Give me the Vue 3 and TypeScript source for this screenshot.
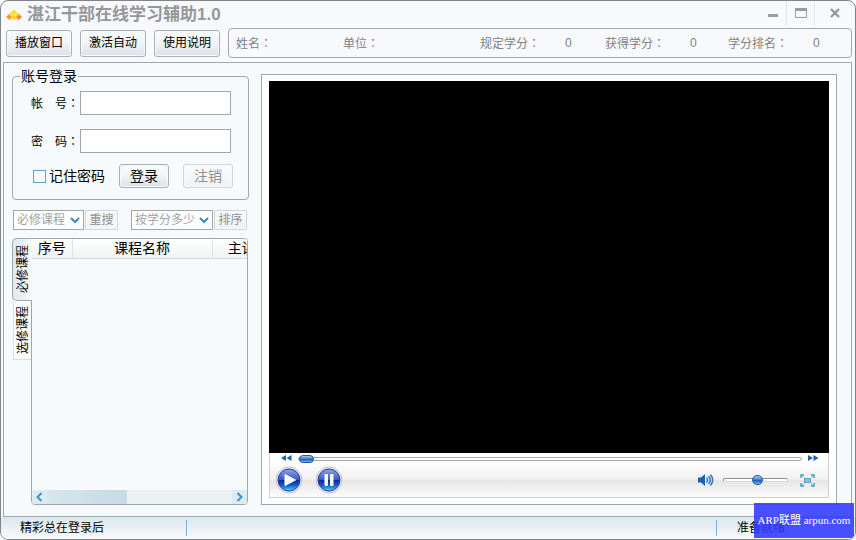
<script setup lang="ts">
import { ref } from 'vue'

interface InfoItem {
  label: string
  value?: string
}

const tools: string[] = ['播放窗口', '激活自动', '使用说明']
const info: InfoItem[] = [
  { label: '姓名' },
  { label: '单位' },
  { label: '规定学分', value: '0' },
  { label: '获得学分', value: '0' },
  { label: '学分排名', value: '0' },
]
const tabs: string[] = ['必修课程', '选修课程']
const columns: string[] = ['序号', '课程名称', '主讲']

const account = ref('')
const password = ref('')
const remember = ref(false)
const activeTab = ref(0)
const progress = ref(0)
const volume = ref(53)
</script>

<template>
  <div class="window">
    <header class="titlebar">
      <svg class="logo" viewBox="0 0 16 12" aria-hidden="true">
        <path d="M8 0.500 L11.500 3.500 L8 6.500 L4.500 3.500Z" fill="#ffe01c" />
        <path d="M3.500 4.500 L7.500 8 L3.500 11 L0 8Z" fill="#f09a28" />
        <path d="M12.500 4.500 L16 8 L12.500 11 L8.500 8Z" fill="#ee8a22" />
        <path d="M8 5.500 L11.500 8.500 L8 11.500 L4.500 8.500Z" fill="#ffcf3a" />
        <path d="M4.500 4 L6.500 6 L4.500 7.500 L2.500 6Z M11.500 4 L13.500 6 L11.500 7.500 L9.500 6Z" fill="#ffd21f" />
        <path d="M5 9.500 L6 10.500 M11 9.500 L10 10.500" stroke="#fff4d8" />
      </svg>
      <h1>湛江干部在线学习辅助1.0</h1>
      <div class="winbtns">
        <button type="button" aria-label="最小化">
          <svg width="12" height="12" viewBox="0 0 12 12"><rect x="1" y="7" width="10" height="3" fill="#9b9da0" /></svg>
        </button>
        <button type="button" aria-label="最大化">
          <svg width="12" height="12" viewBox="0 0 12 12"><path d="M0.500 1.500h11v9h-11z" fill="none" stroke="#9a9da0" /><path d="M0 1h12v3H0z" fill="#9a9da0" /></svg>
        </button>
        <button type="button" class="close" aria-label="关闭">
          <svg width="12" height="12" viewBox="0 0 12 12"><path d="M2 2l8 8M10 2l-8 8" stroke="#8b95a0" stroke-width="2.200" /></svg>
        </button>
      </div>
    </header>

    <div class="toolbar">
      <button v-for="t in tools" :key="t" type="button" class="btn tool">{{ t }}</button>
      <div class="info">
        <div v-for="item in info" :key="item.label" class="info-item">
          <span class="info-label">{{ item.label }}<span class="colon">：</span></span>
          <span v-if="item.value">{{ item.value }}</span>
        </div>
      </div>
    </div>

    <main class="main">
      <section class="side">
        <fieldset class="login">
          <legend>账号登录</legend>
          <div class="field">
            <label for="account">帐　号<span class="colon">：</span></label>
            <input id="account" v-model="account" type="text" />
          </div>
          <div class="field">
            <label for="password">密　码<span class="colon">：</span></label>
            <input id="password" v-model="password" type="password" />
          </div>
          <div class="actions">
            <label class="remember"><input v-model="remember" type="checkbox" />记住密码</label>
            <button type="button" class="btn action">登录</button>
            <button type="button" class="btn action" disabled>注销</button>
          </div>
        </fieldset>

        <div class="filters">
          <div class="pick">
            <select aria-label="课程类型" disabled><option>必修课程</option></select>
            <svg width="10" height="7" viewBox="0 0 10 7"><path d="M1 1l4 4 4-4" fill="none" stroke="#3b8bc6" stroke-width="2.200" /></svg>
          </div>
          <button type="button" class="btn small" disabled>重搜</button>
          <div class="pick wide">
            <select aria-label="排序方式" disabled><option>按学分多少</option></select>
            <svg width="10" height="7" viewBox="0 0 10 7"><path d="M1 1l4 4 4-4" fill="none" stroke="#3b8bc6" stroke-width="2.200" /></svg>
          </div>
          <button type="button" class="btn small" disabled>排序</button>
        </div>

        <div class="courses">
          <div class="tabs" role="tablist">
            <button
              v-for="(t, i) in tabs"
              :key="t"
              type="button"
              role="tab"
              class="tab"
              :class="{ active: activeTab === i }"
              :aria-selected="activeTab === i"
              @click="activeTab = i"
            ><span>{{ t }}</span></button>
          </div>
          <div class="list">
            <div class="viewport">
              <table>
                <thead>
                  <tr><th v-for="c in columns" :key="c" scope="col">{{ c }}</th></tr>
                </thead>
              </table>
            </div>
            <div class="scroll">
              <button type="button" aria-label="向左滚动">
                <svg width="7" height="10" viewBox="0 0 7 10"><path d="M5.500 1l-4 4 4 4" fill="none" stroke="#3f92c4" stroke-width="2" /></svg>
              </button>
              <div class="track"><div class="thumb"></div></div>
              <button type="button" aria-label="向右滚动">
                <svg width="7" height="10" viewBox="0 0 7 10"><path d="M1.500 1l4 4-4 4" fill="none" stroke="#3f92c4" stroke-width="2" /></svg>
              </button>
            </div>
          </div>
        </div>
      </section>

      <section class="player">
        <div class="video"></div>
        <div class="controls">
          <div class="seek">
            <button type="button" class="plain" aria-label="快退">
              <svg width="11" height="7" viewBox="0 0 11 7"><path d="M5 0v6L0 3zM10.500 0v6L5.500 3z" fill="#1d62a8" /></svg>
            </button>
            <input v-model="progress" type="range" class="range seekbar" min="0" max="100" aria-label="进度" />
            <button type="button" class="plain" aria-label="快进">
              <svg width="11" height="7" viewBox="0 0 11 7"><path d="M0 0v6l5-3zM5.500 0v6l5-3z" fill="#1d62a8" /></svg>
            </button>
          </div>
          <div class="buttons">
            <button type="button" class="plain" aria-label="播放">
              <svg width="28" height="28" viewBox="0 0 28 28">
                <defs>
                  <linearGradient id="orb" x1="0" y1="0" x2="0" y2="1">
                    <stop offset="0" stop-color="#8fa6e0" />
                    <stop offset="0.48" stop-color="#3c5cc0" />
                    <stop offset="0.52" stop-color="#0a2a9c" />
                    <stop offset="0.75" stop-color="#1660cc" />
                    <stop offset="1" stop-color="#4fd8ff" />
                  </linearGradient>
                </defs>
                <circle cx="14" cy="14" r="13" fill="#e4e5f1" stroke="#c3c5dc" />
                <circle cx="14" cy="14" r="11" fill="url(#orb)" stroke="#2a3d9a" />
                <path d="M10 8.500v11l10.500-5.500z" fill="#fff" stroke="#fff" stroke-linejoin="round" />
              </svg>
            </button>
            <button type="button" class="plain" aria-label="暂停">
              <svg width="28" height="28" viewBox="0 0 28 28">
                <circle cx="14" cy="14" r="13" fill="#e4e5f1" stroke="#c3c5dc" />
                <circle cx="14" cy="14" r="11" fill="url(#orb)" stroke="#2a3d9a" />
                <rect x="9.500" y="8" width="3.500" height="12" rx="1" fill="#fff" />
                <rect x="15" y="8" width="3.500" height="12" rx="1" fill="#fff" />
              </svg>
            </button>
            <div class="spacer"></div>
            <button type="button" class="plain" aria-label="静音">
              <svg width="16" height="14" viewBox="0 0 16 14">
                <path d="M0 4.500h3L7 1v12L3 9.500H0z" fill="#1b62ae" />
                <path d="M8.500 4.500q2 2.500 0 5M10.500 3q3.500 4 0 8M12.500 1.500q4.500 5.500 0 11" fill="none" stroke="#3b7fc4" stroke-width="1.600" />
              </svg>
            </button>
            <input v-model="volume" type="range" class="range volume" min="0" max="100" aria-label="音量" />
            <button type="button" class="plain" aria-label="全屏">
              <svg width="15" height="13" viewBox="0 0 15 13">
                <path d="M1 4V1h3M11 1h3v3M14 9v3h-3M4 12H1V9" fill="none" stroke="#3c97bd" stroke-width="1.300" />
                <path d="M2 2l2 2M13 2l-2 2M13 11l-2-2M2 11l2-2" stroke="#8ac2da" />
                <rect x="4.500" y="4.500" width="6" height="4" fill="#86bede" stroke="#5aa6cc" />
              </svg>
            </button>
          </div>
        </div>
      </section>
    </main>

    <footer class="status">
      <span class="message">精彩总在登录后</span>
      <span class="ready">准备就绪</span>
    </footer>
    <div class="badge">ARP联盟 arpun.com</div>
  </div>
</template>

<style>
body {
  margin: 0;
  background: #fff;
}
</style>

<style scoped>
* {
  box-sizing: border-box;
}
.window {
  position: relative;
  display: flex;
  flex-direction: column;
  min-height: 100vh;
  border: 1px solid #828385;
  border-radius: 8px;
  background: #f7f9fc;
  font-family: "Liberation Sans", "Noto Sans CJK SC", sans-serif;
  font-size: 12px;
  line-height: 16px;
  color: #000;
  overflow: hidden;
}
button,
input,
select {
  margin: 0;
  padding: 0;
  font: inherit;
  color: inherit;
}
svg {
  display: block;
}
.colon {
  font-family: "Noto Sans CJK TC", sans-serif;
}
.titlebar {
  display: flex;
  align-items: center;
  height: 27px;
  padding-left: 5px;
}
.logo {
  width: 16px;
  height: 12px;
}
h1 {
  flex: 1;
  margin: 0 0 0 5px;
  font-size: 17px;
  line-height: 24px;
  font-weight: 700;
  color: #959799;
}
.winbtns {
  display: flex;
  align-self: flex-start;
}
.winbtns button {
  display: flex;
  align-items: center;
  justify-content: center;
  width: 28px;
  height: 24px;
  border: 0;
  border-right: 1px solid #e3e6ea;
  background: none;
}
.winbtns .close {
  width: 40px;
  border: 0;
}
.btn {
  border: 1px solid #abb0b4;
  border-radius: 3px;
  background: linear-gradient(#fafbfc, #f0f3f5 50%, #d9e3e6);
  box-shadow: inset 0 0 0 1px #f5f8fa;
  white-space: nowrap;
}
.btn:disabled {
  border-color: #d3d6d8;
  color: #8d8f91;
  background: linear-gradient(#fafbfc, #f0f1f2);
}
.toolbar {
  display: flex;
  align-items: center;
  gap: 8px;
  height: 30px;
  margin: 0 3px 4px 5px;
}
.tool {
  width: 66px;
  height: 27px;
}
.info {
  flex: 1;
  display: grid;
  grid-template-columns: 107fr 137fr 125fr 123fr 123fr;
  align-items: center;
  height: 30px;
  padding-left: 7px;
  border: 1px solid #a5a8ab;
  border-radius: 4px;
  color: #808284;
}
.info-item {
  display: flex;
}
.info-label {
  min-width: 85px;
}
.main {
  flex: 1;
  display: grid;
  grid-template-columns: 237px 1fr;
  gap: 12px;
  margin: 0 3px 0 2px;
  padding: 5px 14px 11px 8px;
  border: 1px solid #9aabb0;
  background: #f7fafc;
}
.side {
  display: flex;
  flex-direction: column;
  min-width: 0;
}
.login {
  min-width: 0;
  margin: 0;
  padding: 7px 15px 11px 18px;
  border: 1px solid #a2a6aa;
  border-radius: 4px;
}
legend {
  margin-left: -11px;
  padding: 0 1px;
  font-size: 14px;
  line-height: 16px;
}
.field {
  display: flex;
  align-items: center;
  margin-bottom: 14px;
}
.field label {
  width: 49px;
  white-space: nowrap;
}
.field input {
  flex: 1;
  min-width: 0;
  height: 24px;
  margin-right: 2px;
  padding: 0 4px;
  border: 1px solid #a2a6aa;
  background: #fff;
}
.actions {
  display: flex;
  gap: 14px;
  margin-top: -3px;
  font-size: 14px;
}
.remember {
  flex: 1;
  display: flex;
  align-items: center;
  gap: 3px;
  padding-left: 2px;
  white-space: nowrap;
}
.remember input {
  appearance: none;
  width: 13px;
  height: 13px;
  border: 1px solid #5b9fd6;
  background: #f8fcff;
}
.remember input:checked {
  background: #5b9fd6;
}
.action {
  width: 50px;
  height: 24px;
}
.filters {
  display: flex;
  gap: 1px;
  margin: 10px 2px 8px 1px;
}
.pick {
  position: relative;
  width: 71px;
  height: 20px;
}
.wide {
  width: 82px;
  margin-left: 12px;
}
.pick select {
  appearance: none;
  width: 100%;
  height: 100%;
  padding-left: 3px;
  border: 1px solid #a2a6aa;
  border-radius: 0;
  background: #fff;
  color: #a0a3a6;
  opacity: 1;
}
.pick svg {
  position: absolute;
  right: 4px;
  top: 7px;
}
.small {
  width: 33px;
  height: 20px;
  border-radius: 1px;
}
.courses {
  flex: 1;
  display: flex;
  margin-right: 1px;
}
.tabs {
  display: flex;
  flex-direction: column;
  width: 19px;
}
.tab {
  display: flex;
  align-items: center;
  justify-content: center;
  height: 59px;
  margin-left: 1px;
  border: 1px solid #dcdfe2;
  border-width: 0 0 1px 1px;
  background: #f9fafb;
}
.tab span {
  writing-mode: vertical-rl;
  text-orientation: sideways;
  transform: rotate(180deg);
  white-space: nowrap;
}
.tab.active {
  z-index: 1;
  height: 63px;
  margin: 0 -1px 0 0;
  border: 1px solid #a2a6aa;
  border-right: 0;
  border-radius: 5px 0 0 5px;
  background: linear-gradient(90deg, #dde9f1, #f7fafc);
}
.list {
  flex: 1;
  display: flex;
  flex-direction: column;
  min-width: 0;
  border: 1px solid #a2a6aa;
  border-radius: 0 4px 4px 4px;
  overflow: hidden;
}
.viewport {
  flex: 1;
  overflow: hidden;
}
table {
  width: 240px;
  table-layout: fixed;
  border-collapse: collapse;
}
th {
  height: 19px;
  padding: 0;
  border-right: 1px solid #e0e3e6;
  border-bottom: 1px solid #d5d8db;
  background: linear-gradient(#fff, #f0f2f4);
  font-size: 14px;
  line-height: 18px;
  font-weight: 400;
  white-space: nowrap;
}
th:nth-child(1) {
  width: 40px;
}
th:nth-child(2) {
  width: 140px;
}
.scroll {
  display: flex;
  height: 14px;
  background: #e9f1f5;
}
.scroll button {
  display: flex;
  align-items: center;
  justify-content: center;
  width: 15px;
  border: 0;
  background: #dcebf3;
}
.track {
  flex: 1;
}
.thumb {
  width: 43%;
  height: 100%;
  background: linear-gradient(90deg, #d6e6ee, #c5dae5);
}
.player {
  display: flex;
  flex-direction: column;
  min-width: 0;
  margin-top: 6px;
  padding: 6px 7px;
  border: 1px solid #a2a6aa;
  background: #fff;
}
.video {
  flex: 1;
  background: #000;
}
.controls {
  height: 45px;
  border: 1px solid #cfcfcf;
  border-top: 0;
  background: linear-gradient(#fff 20%, #f1f1f1 60%, #e4e4e4 61%, #fafafa 95%);
}
.plain {
  border: 0;
  background: none;
}
.seek {
  display: flex;
  align-items: center;
  gap: 6px;
  height: 11px;
  padding: 0 9px 0 11px;
}
.buttons {
  display: flex;
  align-items: center;
  gap: 12px;
  height: 32px;
  padding: 0 13px 0 5px;
}
.spacer {
  flex: 1;
}
.range {
  appearance: none;
  height: 11px;
  background: none;
}
.seekbar {
  flex: 1;
  min-width: 0;
}
.range::-webkit-slider-runnable-track {
  height: 4px;
  border: 1px solid #a9a9a9;
  border-radius: 2px;
  background: #fff;
}
.range::-webkit-slider-thumb {
  appearance: none;
  width: 15px;
  height: 8px;
  margin-top: -3px;
  border: 1px solid #2459a8;
  border-radius: 4px;
  background: linear-gradient(#a9c8ee, #3f79c8 50%, #1f58b0 52%, #67b4ee);
}
.volume {
  width: 65px;
  margin-left: -3px;
}
.volume::-webkit-slider-runnable-track {
  height: 4px;
  border-color: #8f8f8f #c4c4c4 #dcdcdc #8f8f8f;
}
.volume::-webkit-slider-thumb {
  width: 11px;
  height: 10px;
  margin-top: -4px;
  border-radius: 5px;
}
.status {
  display: flex;
  align-items: center;
  height: 22px;
  padding-left: 19px;
  background: linear-gradient(#dbe8ed, #f8f9fb);
}
.message {
  flex: 0 0 167px;
  border-right: 1px solid #7fb0cf;
}
.ready {
  width: 139px;
  margin-left: auto;
  padding-left: 20px;
  border-left: 1px solid #7fb0cf;
}
.badge {
  position: absolute;
  right: 1px;
  bottom: 1px;
  width: 100px;
  height: 35px;
  background: rgba(48, 56, 255, 0.88);
  color: #fff;
  font-family: "Liberation Serif", "Noto Sans CJK SC", serif;
  font-size: 11px;
  line-height: 35px;
  text-align: center;
  white-space: nowrap;
}
</style>
